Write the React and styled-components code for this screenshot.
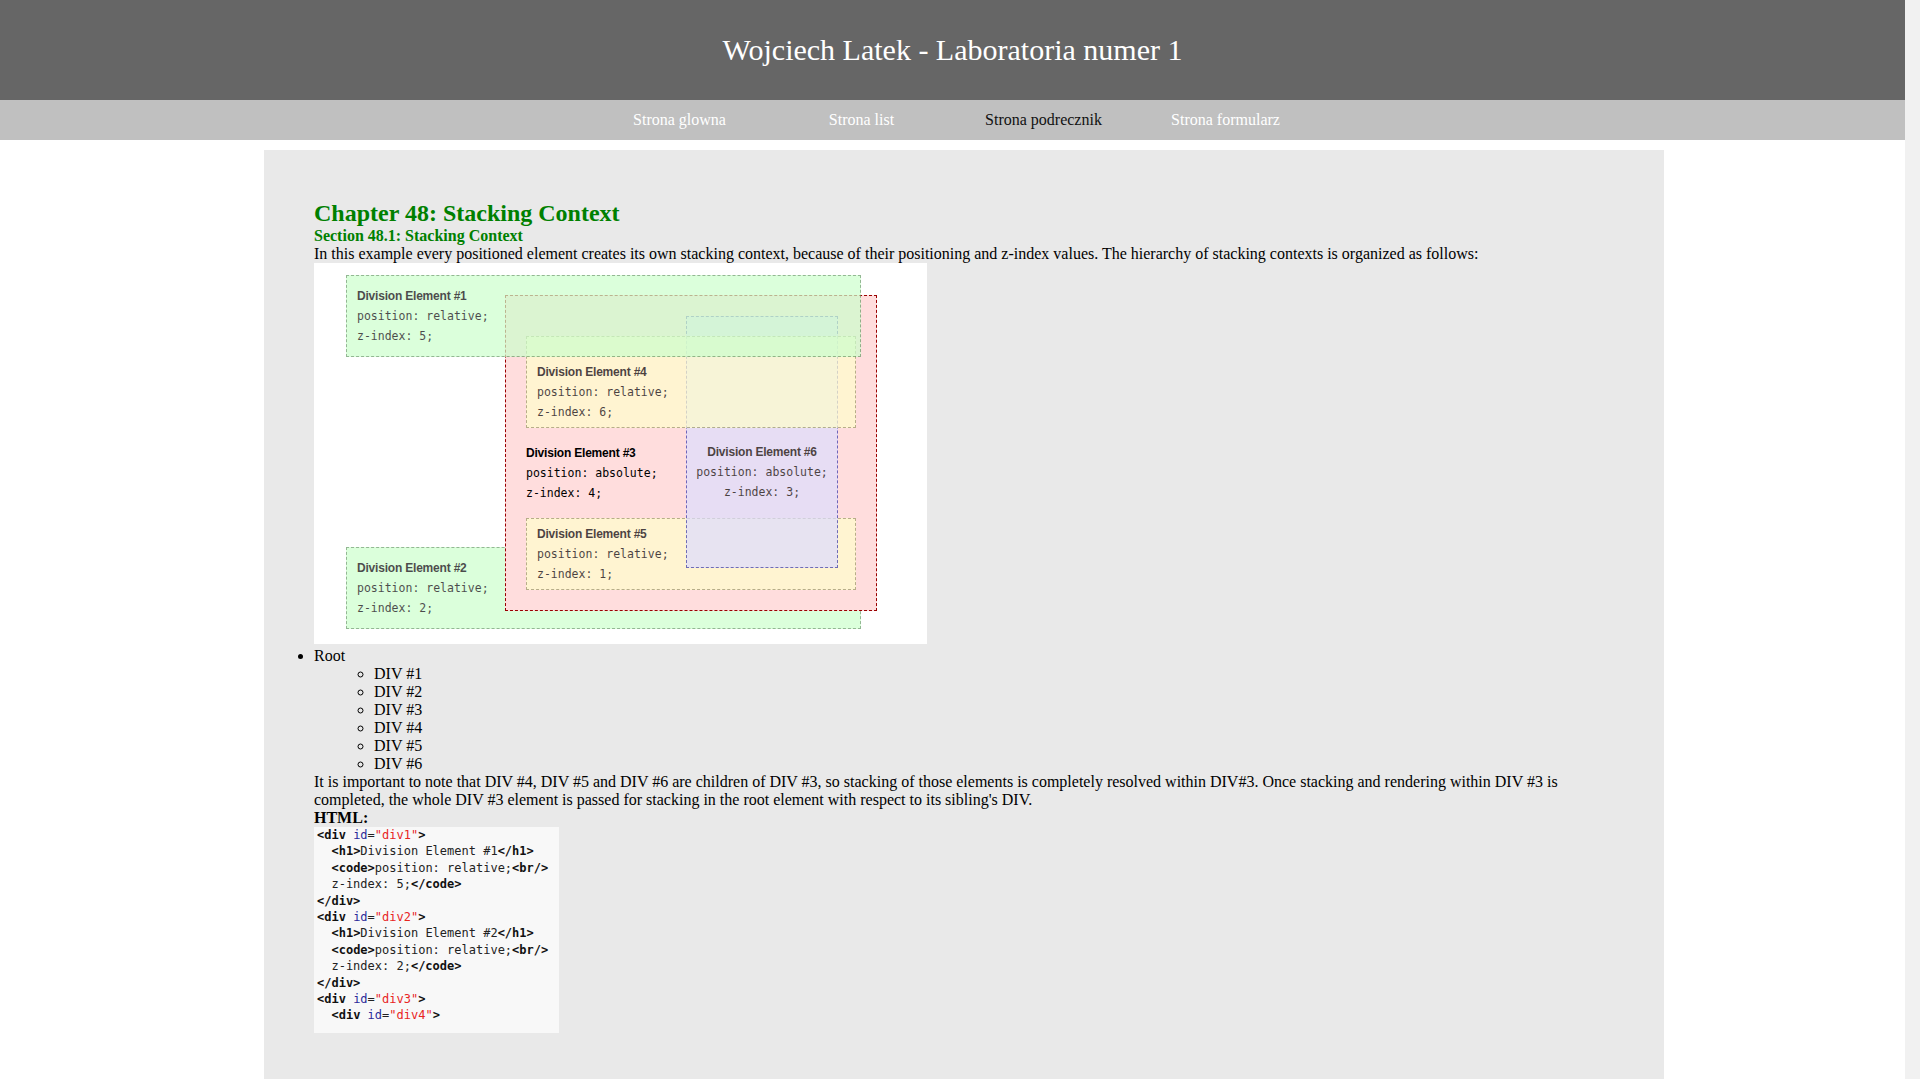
import React from 'react';
import styled, { createGlobalStyle } from 'styled-components';

const GlobalStyle = createGlobalStyle`
  html {
    margin: 0;
    padding: 0;
    background: #f1f1f1;
  }
  body {
    margin: 0;
    width: 1905px;
    background: #fff;
    font-family: "Liberation Serif", "Times New Roman", serif;
    font-size: 16px;
    color: #000;
  }
`;

const Header = styled.header`
  height: 100px;
  background: #666666;
  display: flex;
  align-items: center;
  justify-content: center;
`;

const Title = styled.h1`
  margin: 0;
  font-size: 30px;
  font-weight: normal;
  color: #fff;
`;

const Nav = styled.nav`
  height: 40px;
  background: #c0c0c0;
  display: flex;
  justify-content: center;
  align-items: center;
`;

const NavItem = styled.a`
  width: 182px;
  text-align: center;
  font-size: 16px;
  text-decoration: none;
  color: ${p => (p.$active ? '#111' : '#fff')};
  cursor: pointer;
`;

const Main = styled.main`
  width: 1400px;
  box-sizing: border-box;
  margin: 10px 0 0 264px;
  padding: 50px 50px 50px;
  background: #e9e9e9;
`;

const Chapter = styled.h1`
  margin: 0;
  font-size: 24px;
  color: #008000;
`;

const Section = styled.h2`
  margin: 0;
  font-size: 16px;
  color: #008000;
`;

const Text = styled.p`
  margin: 0;
`;

const Label = styled.div`
  font-weight: bold;
`;

/* stacking context example picture */
const Stage = styled.div`
  position: relative;
  box-sizing: border-box;
  width: 613px;
  height: 381px;
  padding: 12px 66px 0 32px;
  margin-bottom: 3px;
  background: #fff;
  overflow: hidden;
  font: 12px/20px "Liberation Sans", Arial, sans-serif;
`;

const Layer = styled.div`
  position: relative;
  z-index: ${p => p.$z};
  opacity: 0.7;
`;

const GreenBox = styled(Layer)`
  border: 1px dashed #696;
  background: #cfc;
  padding: 10px;
  margin-bottom: ${p => p.$gap || 0}px;
`;

const RedBox = styled(Layer)`
  position: absolute;
  opacity: 1;
  top: 32px;
  left: 191px;
  width: 330px;
  padding: 40px 20px 20px;
  border: 1px dashed #900;
  background: #fdd;
`;

const YellowBox = styled(Layer)`
  border: 1px dashed #996;
  background: #ffc;
  padding: ${p => p.$pad};
  margin: ${p => p.$margin};
`;

const BlueBox = styled(Layer)`
  position: absolute;
  top: 20px;
  left: 180px;
  width: 150px;
  height: 125px;
  padding-top: 125px;
  border: 1px dashed #33a;
  background: #ddf;
  text-align: center;
`;

const BoxTitle = styled.h1`
  margin: 0;
  font: bold 12px/20px "Liberation Sans", Arial, sans-serif;
  letter-spacing: -0.2px;
`;

const BoxCode = styled.code`
  display: block;
  font: 11.5px/20px "DejaVu Sans Mono", monospace;
`;

const Tree = styled.ul`
  margin: 0;
  padding-left: 0;
  list-style: disc;
`;

const SubTree = styled.ul`
  margin: 0;
  padding-left: 60px;
  list-style: circle;
`;

const CodeBox = styled.div`
  box-sizing: border-box;
  width: 245px;
  padding: 0 0 9px 3px;
  background: #f8f8f8;
`;

const Code = styled.pre`
  margin: 0;
  font: 12px/16.4px "DejaVu Sans Mono", monospace;
  color: #222;
`;

const Tag = styled.span`
  font-weight: bold;
  color: #111;
`;

const Attr = styled.span`
  color: #2b2b9a;
`;

const Val = styled.span`
  color: #e8251f;
`;

const TOKEN = /(<\/?[a-zA-Z0-9]+\/?>|<\/?[a-zA-Z0-9]+|\/?>|[a-z-]+(?==)|"[^"]*")/g;

function Highlight({ source }) {
  return source.split('\n').map((line, i) => (
    <React.Fragment key={i}>
      {line.split(TOKEN).map((part, j) => {
        if (j % 2 === 0) return part;
        if (part[0] === '"') return <Val key={j}>{part}</Val>;
        if (part[0] === '<' || part.endsWith('>')) return <Tag key={j}>{part}</Tag>;
        return <Attr key={j}>{part}</Attr>;
      })}
      {'\n'}
    </React.Fragment>
  ));
}

const htmlSource = `<div id="div1">
  <h1>Division Element #1</h1>
  <code>position: relative;<br/>
  z-index: 5;</code>
</div>
<div id="div2">
  <h1>Division Element #2</h1>
  <code>position: relative;<br/>
  z-index: 2;</code>
</div>
<div id="div3">
  <div id="div4">`;

const menu = [
  { label: 'Strona glowna' },
  { label: 'Strona list' },
  { label: 'Strona podrecznik', active: true },
  { label: 'Strona formularz' },
];

function Entry({ n, kind, z }) {
  return (
    <>
      <BoxTitle>Division Element #{n}</BoxTitle>
      <BoxCode>
        position: {kind};<br />
        z-index: {z};
      </BoxCode>
    </>
  );
}

export default function App() {
  return (
    <>
      <GlobalStyle />
      <Header>
        <Title>Wojciech Latek - Laboratoria numer 1</Title>
      </Header>
      <Nav>
        {menu.map(item => (
          <NavItem key={item.label} $active={item.active}>{item.label}</NavItem>
        ))}
      </Nav>
      <Main>
        <Chapter>Chapter 48: Stacking Context</Chapter>
        <Section>Section 48.1: Stacking Context</Section>
        <Text>
          In this example every positioned element creates its own stacking context, because of their positioning and
          z-index values. The hierarchy of stacking contexts is organized as follows:
        </Text>
        <Stage>
          <GreenBox $z={5} $gap={190}>
            <Entry n={1} kind="relative" z={5} />
          </GreenBox>
          <GreenBox $z={2}>
            <Entry n={2} kind="relative" z={2} />
          </GreenBox>
          <RedBox $z={4}>
            <YellowBox $z={6} $pad="25px 10px 5px" $margin="0 0 15px">
              <Entry n={4} kind="relative" z={6} />
            </YellowBox>
            <Entry n={3} kind="absolute" z={4} />
            <YellowBox $z={1} $pad="5px 10px" $margin="15px 0 0">
              <Entry n={5} kind="relative" z={1} />
            </YellowBox>
            <BlueBox $z={3}>
              <Entry n={6} kind="absolute" z={3} />
            </BlueBox>
          </RedBox>
        </Stage>
        <Tree>
          <li>
            Root
            <SubTree>
              {[1, 2, 3, 4, 5, 6].map(n => (
                <li key={n}>DIV #{n}</li>
              ))}
            </SubTree>
          </li>
        </Tree>
        <Text>
          It is important to note that DIV #4, DIV #5 and DIV #6 are children of DIV #3, so stacking of those elements
          is completely resolved within DIV#3. Once stacking and rendering within DIV #3 is completed, the whole DIV #3
          element is passed for stacking in the root element with respect to its sibling's DIV.
        </Text>
        <Label>HTML:</Label>
        <CodeBox>
          <Code>
            <Highlight source={htmlSource} />
          </Code>
        </CodeBox>
      </Main>
    </>
  );
}
